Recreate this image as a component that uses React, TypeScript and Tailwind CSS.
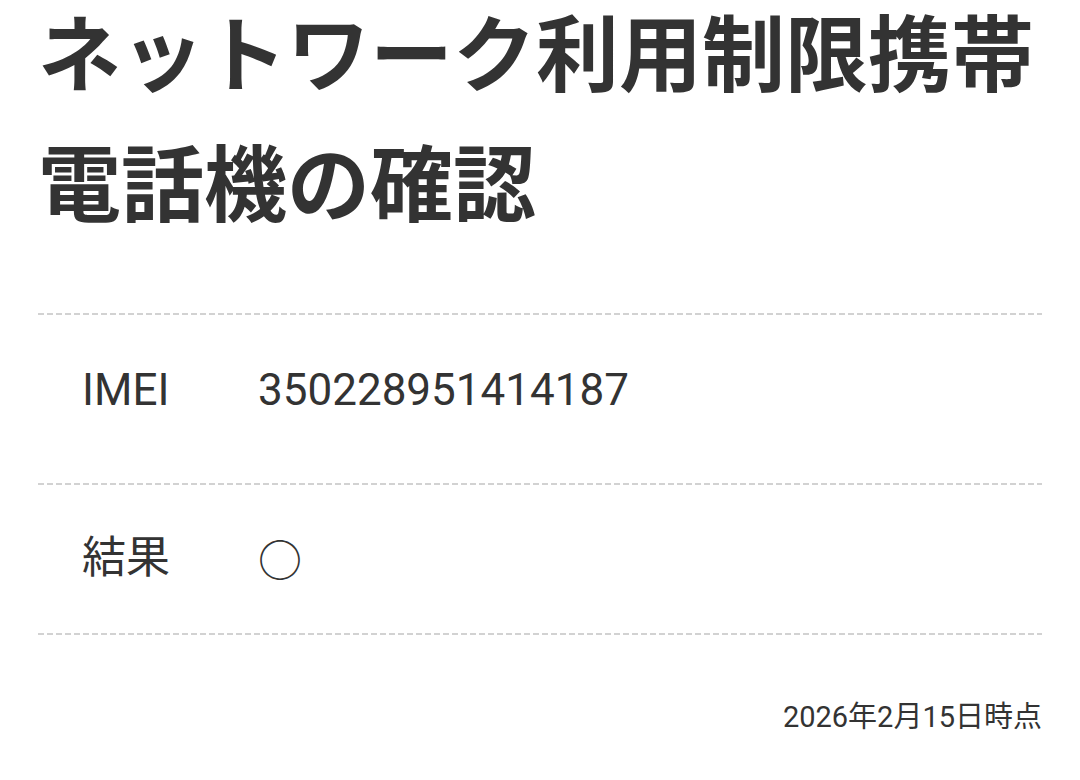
export default function App() {
  const dash =
    "h-[2px] w-full bg-[repeating-linear-gradient(to_right,#d2d2d2_0_6px,transparent_6px_9px)]";
  return (
    <div className="w-[1080px] h-[780px] overflow-hidden bg-white text-[#333333] font-['Roboto','Noto_Sans_CJK_JP',sans-serif]">
      <div className="px-[38px]">
        <h1 className="mt-[-16px] text-[83px] leading-[130px] font-bold font-['Noto_Sans_CJK_JP',sans-serif] tracking-normal">
          ネットワーク利用制限携帯電話機の確認
        </h1>
        <div className="mt-[69px]">
          <div className={dash} />
          <div className="h-[168px] flex items-start pt-[42px] pl-[44px] text-[44px] leading-[66px]">
            <div className="w-[176px]">IMEI</div>
            <div>350228951414187</div>
          </div>
          <div className={dash} />
          <div className="h-[148px] flex items-start pt-[40px] pl-[44px] text-[44px] leading-[66px]">
            <div className="w-[176px]">結果</div>
            <div className="font-['Noto_Sans_CJK_JP',sans-serif]">○</div>
          </div>
          <div className={dash} />
        </div>
        <div className="mt-[62px] flex justify-end text-[29px] leading-[40px]">
          2026年2月15日時点
        </div>
      </div>
    </div>
  );
}
